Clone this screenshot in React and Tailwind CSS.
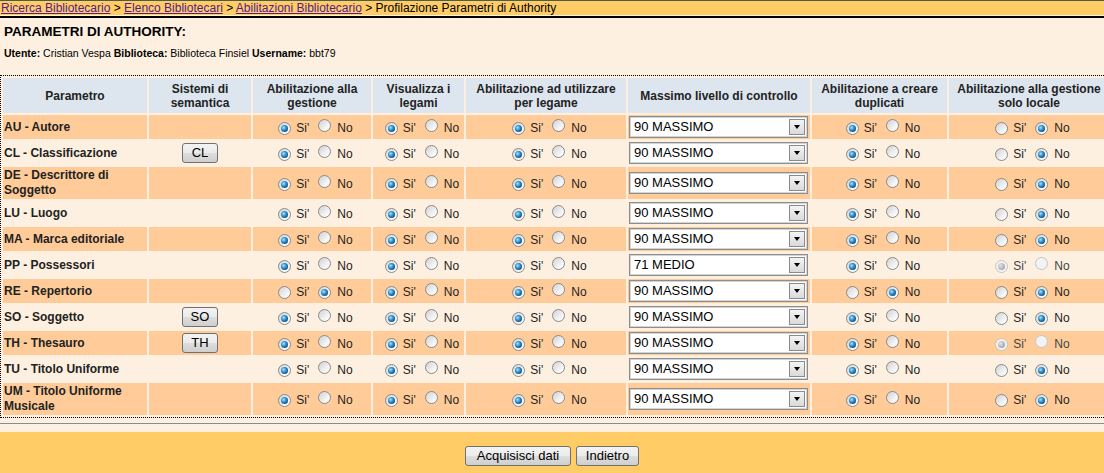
import React from 'react';

const ROWS = [
  { label: 'AU - Autore', gest: 'si', vis: 'si', util: 'si', liv: '90 MASSIMO', dup: 'si', loc: 'no' },
  { label: 'CL - Classificazione', btn: 'CL', gest: 'si', vis: 'si', util: 'si', liv: '90 MASSIMO', dup: 'si', loc: 'no' },
  { label: ['DE - Descrittore di', 'Soggetto'], gest: 'si', vis: 'si', util: 'si', liv: '90 MASSIMO', dup: 'si', loc: 'no' },
  { label: 'LU - Luogo', gest: 'si', vis: 'si', util: 'si', liv: '90 MASSIMO', dup: 'si', loc: 'no' },
  { label: 'MA - Marca editoriale', gest: 'si', vis: 'si', util: 'si', liv: '90 MASSIMO', dup: 'si', loc: 'no' },
  { label: 'PP - Possessori', gest: 'si', vis: 'si', util: 'si', liv: '71 MEDIO', dup: 'si', loc: 'dis' },
  { label: 'RE - Repertorio', gest: 'no', vis: 'si', util: 'si', liv: '90 MASSIMO', dup: 'no', loc: 'no' },
  { label: 'SO - Soggetto', btn: 'SO', gest: 'si', vis: 'si', util: 'si', liv: '90 MASSIMO', dup: 'si', loc: 'no' },
  { label: 'TH - Thesauro', btn: 'TH', gest: 'si', vis: 'si', util: 'si', liv: '90 MASSIMO', dup: 'si', loc: 'dis' },
  { label: 'TU - Titolo Uniforme', gest: 'si', vis: 'si', util: 'si', liv: '90 MASSIMO', dup: 'si', loc: 'no' },
  { label: ['UM - Titolo Uniforme', 'Musicale'], gest: 'si', vis: 'si', util: 'si', liv: '90 MASSIMO', dup: 'si', loc: 'no' },
];

const HEADERS = [
  ['Parametro'],
  ['Sistemi di', 'semantica'],
  ['Abilitazione alla', 'gestione'],
  ['Visualizza i', 'legami'],
  ['Abilitazione ad utilizzare', 'per legame'],
  ['Massimo livello di controllo'],
  ['Abilitazione a creare', 'duplicati'],
  ['Abilitazione alla gestione', 'solo locale'],
];

function Radio({ checked, disabled }) {
  return (
    <span
      className={`inline-flex w-[13px] h-[13px] shrink-0 items-center justify-center rounded-full border ${
        disabled
          ? 'border-[#c4c4c4] bg-[#f3f3f3]'
          : 'border-[#8a8a8a] bg-[linear-gradient(135deg,#d2d2d2,#f6f6f6_70%,#ffffff)]'
      }`}
    >
      {checked &&
        (disabled ? (
          <span className="w-[7px] h-[7px] rounded-full bg-[radial-gradient(circle_at_35%_35%,#e4e4e4,#a9a9a9_70%)]" />
        ) : (
          <span className="w-[7px] h-[7px] rounded-full bg-[radial-gradient(circle_at_38%_38%,#a8e6ff_0%,#2d8fce_40%,#0c3d69_85%)]" />
        ))}
    </span>
  );
}

function SiNo({ value }) {
  const dis = value === 'dis';
  return (
    <div className="flex items-center justify-center pl-[7px] pt-[2px]">
      <Radio checked={value === 'si' || dis} disabled={dis} />
      <span className={`ml-[5px] ${dis ? 'text-[#444]' : ''}`}>Si'</span>
      <span className="ml-[9px]">
        <Radio checked={value === 'no'} disabled={dis} />
      </span>
      <span className={`ml-[6px] ${dis ? 'text-[#444]' : ''}`}>No</span>
    </div>
  );
}

function WinButton({ children, className = '' }) {
  return (
    <button
      className={`h-[20px] rounded-[3px] border border-[#707070] bg-[linear-gradient(#f3f3f3_0%,#ebebeb_48%,#dddddd_52%,#cfcfcf_100%)] text-[13px] leading-[18px] text-black ${className}`}
    >
      {children}
    </button>
  );
}

function Select({ value }) {
  return (
    <div className="flex h-[22px] w-[179px] items-center border border-[#8d8d8d] bg-white shadow-[inset_0_0_0_1px_#d4d4d4]">
      <span className="flex-1 pl-[4px] text-[13px] leading-[16px] text-black">{value}</span>
      <span className="mr-[2px] flex h-[16px] w-[16px] items-center justify-center border border-[#8a8a8a] bg-[linear-gradient(#f4f4f4,#dadada)]">
        <span className="h-0 w-0 border-x-[3.5px] border-t-[4px] border-x-transparent border-t-black" />
      </span>
    </div>
  );
}

export default function App() {
  return (
    <div className="w-[1104px] h-[473px] overflow-hidden bg-[#fdf0e0] font-['Liberation_Sans',Arial,sans-serif] text-[#222]">
      {/* Breadcrumb */}
      <div className="border-t border-[#4b5e4c] bg-[#ffcc66] h-[16px] border-b border-b-[#fff3d6] text-[12px] leading-[14px] pl-[1px] text-black whitespace-nowrap">
        <a className="text-[#551a8b] underline">Ricerca Bibliotecario</a> &gt;{' '}
        <a className="text-[#551a8b] underline">Elenco Bibliotecari</a> &gt;{' '}
        <a className="text-[#551a8b] underline">Abilitazioni Bibliotecario</a> &gt; Profilazione
        Parametri di Authority
      </div>
      <div className="h-[2px] bg-black" />

      {/* Title */}
      <div className="px-[4px] pt-[5px]">
        <h1 className="text-[13.5px] font-bold leading-[17px] text-black">PARAMETRI DI AUTHORITY:</h1>
        <p className="mt-[7px] text-[10.5px] leading-[13px] text-black">
          <b>Utente:</b> Cristian Vespa <b>Biblioteca:</b> Biblioteca Finsiel <b>Username:</b> bbt79
        </p>
      </div>

      {/* Table */}
      <table className="mt-[15px] w-[1112px] table-fixed border-separate border-spacing-[2px] border border-dotted border-black text-[12px]">
        <colgroup>
          <col className="w-[144px]" />
          <col className="w-[102px]" />
          <col className="w-[118px]" />
          <col className="w-[91px]" />
          <col className="w-[160px]" />
          <col className="w-[182px]" />
          <col className="w-[135px]" />
          <col className="w-[160px]" />
        </colgroup>
        <thead>
          <tr className="h-[35px]">
            {HEADERS.map((h, i) => (
              <th key={i} className="bg-[#dde6ef] p-0 pt-[1px] text-center align-middle font-bold leading-[14px]">
                {h.map((line, j) => (
                  <div key={j}>{line}</div>
                ))}
              </th>
            ))}
          </tr>
        </thead>
        <tbody>
          {ROWS.map((r, i) => {
            const bg = i % 2 === 0 ? 'bg-[#ffcc99]' : 'bg-[#fdf0e0]';
            const two = Array.isArray(r.label);
            return (
              <tr key={i} className={two ? 'h-[32px]' : 'h-[24px]'}>
                <td className={`${bg} p-0 pl-[1px] text-left align-middle font-bold leading-[15px]`}>
                  {two ? r.label.map((l, j) => <div key={j}>{l}</div>) : r.label}
                </td>
                <td className={`${bg} p-0 text-center align-middle`}>
                  {r.btn && <WinButton className="w-[36px] h-[19px] leading-[17px]">{r.btn}</WinButton>}
                </td>
                <td className={`${bg} p-0 align-middle`}>
                  <SiNo value={r.gest} />
                </td>
                <td className={`${bg} p-0 align-middle`}>
                  <SiNo value={r.vis} />
                </td>
                <td className={`${bg} p-0 align-middle`}>
                  <SiNo value={r.util} />
                </td>
                <td className={`${bg} p-0 pl-[1px] align-middle`}>
                  <Select value={r.liv} />
                </td>
                <td className={`${bg} p-0 align-middle`}>
                  <SiNo value={r.dup} />
                </td>
                <td className={`${bg} p-0 align-middle`}>
                  <SiNo value={r.loc} />
                </td>
              </tr>
            );
          })}
        </tbody>
      </table>

      <div className="mt-[5px] h-[2px] border-t border-[#8c8c8c] border-b border-b-[#f4f4f4]" />

      {/* Footer */}
      <div className="mt-[7px] flex h-[60px] justify-center gap-[5px] bg-[#ffcc66] pt-[14px]">
        <WinButton className="w-[106px]">Acquisisci dati</WinButton>
        <WinButton className="w-[63px]">Indietro</WinButton>
      </div>
    </div>
  );
}
